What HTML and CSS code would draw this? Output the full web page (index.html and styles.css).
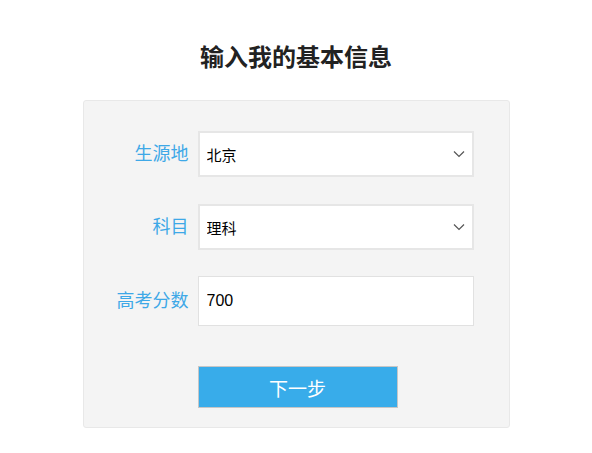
FILE: index.html
```html
<!DOCTYPE html>
<html lang="zh-CN">
<head>
    <meta charset="UTF-8">
    <meta name="viewport" content="width=device-width, initial-scale=1.0">
    <title>输入我的基本信息</title>
    <link rel="stylesheet" href="styles.css">
</head>
<body>
    <h1 class="title">输入我的基本信息</h1>
    <form class="panel" onsubmit="return false">
        <div class="row">
            <label class="row-label" for="origin">生源地</label>
            <div class="select-wrap">
                <select id="origin" class="field">
                    <option>北京</option>
                    <option>上海</option>
                    <option>天津</option>
                </select>
                <svg class="chevron" width="12" height="8" viewBox="0 0 12 8"><path d="M1 1.5 L6 6.5 L11 1.5" fill="none" stroke="#555" stroke-width="1.2"/></svg>
            </div>
        </div>
        <div class="row">
            <label class="row-label" for="subject">科目</label>
            <div class="select-wrap">
                <select id="subject" class="field">
                    <option>理科</option>
                    <option>文科</option>
                </select>
                <svg class="chevron" width="12" height="8" viewBox="0 0 12 8"><path d="M1 1.5 L6 6.5 L11 1.5" fill="none" stroke="#555" stroke-width="1.2"/></svg>
            </div>
        </div>
        <div class="row row-score">
            <label class="row-label" for="score">高考分数</label>
            <input id="score" class="field score" type="text" value="700">
        </div>
        <div class="row">
            <span class="row-label"></span>
            <button class="next-button" type="submit">下一步</button>
        </div>
    </form>
</body>
</html>
```

FILE: styles.css
```css
body {
    margin: 0;
    font-family: "Microsoft YaHei", "Noto Sans CJK SC", "Noto Sans", sans-serif;
    background-color: #fff;
    color: #000;
}
.title {
    margin: 35px 0 0;
    height: 42px;
    line-height: 42px;
    font-size: 24px;
    font-weight: bold;
    color: #222;
    text-align: center;
}
.panel {
    width: 425px;
    margin: 23px auto 0;
    padding: 30px 0 19px;
    background-color: #f4f4f4;
    border: 1px solid #e8e8e8;
    border-radius: 3px;
    display: flex;
    flex-direction: column;
    gap: 27px;
}
.row {
    display: flex;
    align-items: center;
    gap: 9px;
}
.row-score {
    margin-top: -1px;
}
.row-label {
    width: 105px;
    text-align: right;
    font-size: 18px;
    color: #3ea8e7;
    margin-top: -5px;
}
.select-wrap {
    position: relative;
    width: 276px;
}
.field {
    width: 276px;
    box-sizing: border-box;
    border: 2px solid #e6e6e6;
    background-color: #fff;
    font-family: inherit;
    font-size: 15px;
    color: #000;
    outline: none;
}
select.field {
    height: 46px;
    padding: 0 7px;
    appearance: none;
    -webkit-appearance: none;
    border-radius: 0;
}
.chevron {
    position: absolute;
    right: 9px;
    top: 19px;
    pointer-events: none;
}
.score {
    height: 50px;
    padding: 0 8px;
    border-width: 1px;
    border-color: #e1e1e1;
    font-family: "Liberation Sans", Arial, sans-serif;
    font-size: 16px;
}
.next-button {
    width: 200px;
    height: 42px;
    margin-top: 13px;
    background-color: #38acea;
    border: 1px solid #c6c6c6;
    color: #fff;
    font-family: inherit;
    font-size: 19px;
    cursor: pointer;
}
.next-button:hover {
    background-color: #2a9ddb;
}
```
